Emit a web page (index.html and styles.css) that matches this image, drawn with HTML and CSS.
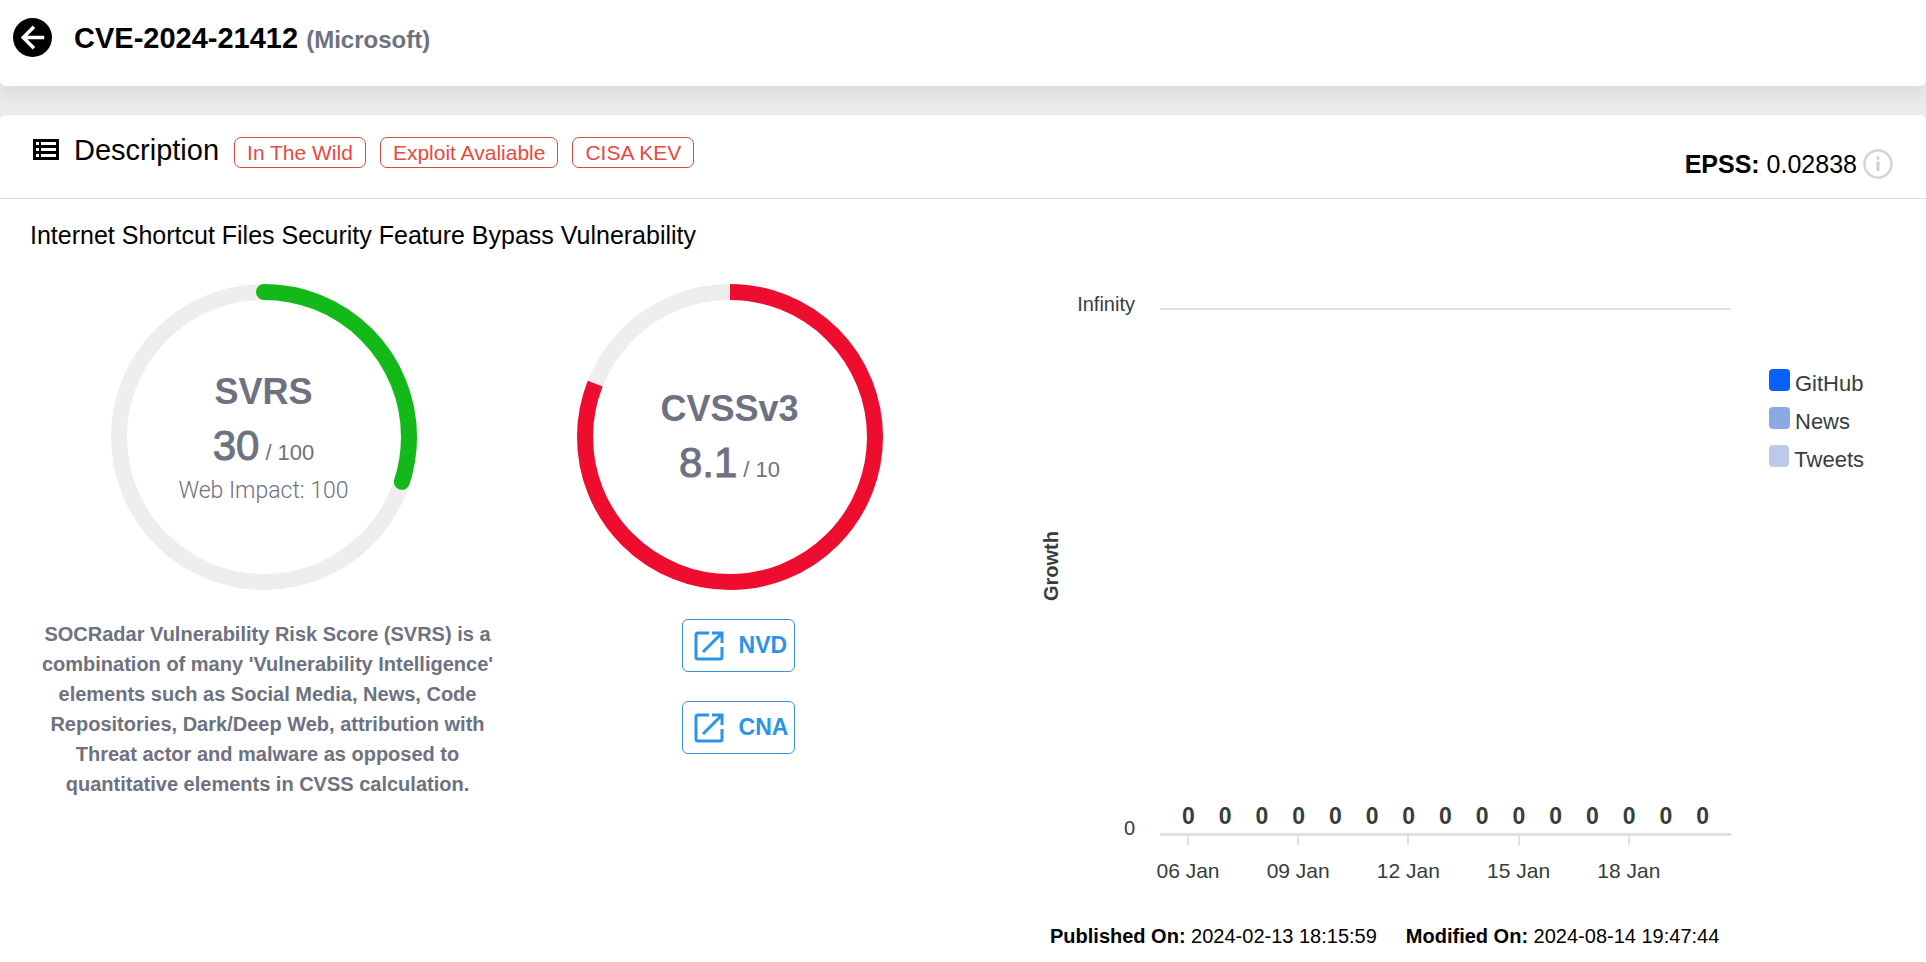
FILE: index.html
```html
<!DOCTYPE html>
<html lang="en">
<head>
<meta charset="utf-8">
<title>CVE-2024-21412</title>
<link rel="stylesheet" href="styles.css">
</head>
<body>
<header class="topbar">
  <button class="back" type="button" aria-label="Back">
    <svg viewBox="0 0 40 40" width="39" height="39"><circle cx="20" cy="20" r="20" fill="#000"/><path d="M32 20H11M21.500 9 10.500 20l11 11" fill="none" stroke="#fff" stroke-width="3.600"/></svg>
  </button>
  <h1 class="title">CVE-2024-21412 <span class="vendor">(Microsoft)</span></h1>
</header>
<main class="card">
  <div class="card-head">
    <div class="head-left">
      <svg class="list-icon" viewBox="0 0 26 21" width="26" height="21"><path fill="#000" fill-rule="evenodd" d="M0 0h26v21H0zM3 3v3h3V3zM8 3v3h15V3zM3 9v3h3V9zM8 9v3h15V9zM3 15v3h3v-3zM8 15v3h15v-3z"/></svg>
      <h2 class="section">Description</h2>
      <ul class="badges"><li class="badge">In The Wild</li><li class="badge">Exploit Avaliable</li><li class="badge">CISA KEV</li></ul>
    </div>
    <div class="epss">
      <span><b>EPSS:</b> 0.02838</span>
      <button class="info" type="button" aria-label="About EPSS">
        <svg viewBox="0 0 30 30" width="30" height="30"><circle cx="15" cy="15" r="13.500" fill="none" stroke="#d6d6d6" stroke-width="2.600"/><path d="M13.500 7.500h3v3h-3zM13.500 12.500h3V22h-3z" fill="#cfcfcf"/></svg>
      </button>
    </div>
  </div>
  <p class="summary">Internet Shortcut Files Security Feature Bypass Vulnerability</p>
  <div class="panels">
    <section class="score">
      <div class="gauge">
        <svg viewBox="0 0 306 306" width="306" height="306"><circle class="track" cx="153" cy="153" r="145"/><circle class="arc arc-green" cx="153" cy="153" r="145" pathLength="100" stroke-dasharray="30 100" transform="rotate(-90 153 153)"/></svg>
        <div class="gauge-text">
          <h3 class="gauge-name">SVRS</h3>
          <p class="gauge-value"><span class="num">30</span> <span class="max">/ 100</span></p>
          <p class="impact">Web Impact: 100</p>
        </div>
      </div>
      <p class="about">SOCRadar Vulnerability Risk Score (SVRS) is a combination of many 'Vulnerability Intelligence' elements such as Social Media, News, Code Repositories, Dark/Deep Web, attribution with Threat actor and malware as opposed to quantitative elements in CVSS calculation.</p>
    </section>
    <section class="score">
      <div class="gauge">
        <svg viewBox="0 0 306 306" width="306" height="306"><circle class="track" cx="153" cy="153" r="145"/><circle class="arc arc-red" cx="153" cy="153" r="145" pathLength="100" stroke-dasharray="81 100" transform="rotate(-90 153 153)"/></svg>
        <div class="gauge-text gauge-text-short">
          <h3 class="gauge-name">CVSSv3</h3>
          <p class="gauge-value"><span class="num">8.1</span> <span class="max">/ 10</span></p>
        </div>
      </div>
      <div class="links">
        <a class="link" href="#nvd"><svg viewBox="0 0 30 30" width="30" height="30"><path d="M15 2H4Q2 2 2 4V26Q2 28 4 28H26Q28 28 28 26V16M18 2H28V12M27 3 9 21" fill="none" stroke="#2a94e8" stroke-width="3"/></svg>NVD</a>
        <a class="link" href="#cna"><svg viewBox="0 0 30 30" width="30" height="30"><path d="M15 2H4Q2 2 2 4V26Q2 28 4 28H26Q28 28 28 26V16M18 2H28V12M27 3 9 21" fill="none" stroke="#2a94e8" stroke-width="3"/></svg>CNA</a>
      </div>
    </section>
    <section class="trend">
      <div class="chart">
        <div class="y-title">Growth</div>
        <div class="y-labels"><span>Infinity</span><span>0</span></div>
        <div class="plot">
          <ol class="values"><li>0</li><li>0</li><li>0</li><li>0</li><li>0</li><li>0</li><li>0</li><li>0</li><li>0</li><li>0</li><li>0</li><li>0</li><li>0</li><li>0</li><li>0</li></ol>
        </div>
        <ol class="dates"><li>06 Jan</li><li>09 Jan</li><li>12 Jan</li><li>15 Jan</li><li>18 Jan</li></ol>
        <ul class="legend">
          <li><i class="swatch github"></i>GitHub</li>
          <li><i class="swatch news"></i>News</li>
          <li><i class="swatch tweets"></i>Tweets</li>
        </ul>
      </div>
      <p class="stamps"><span><b>Published On:</b> 2024-02-13 18:15:59</span><span><b>Modified On:</b> 2024-08-14 19:47:44</span></p>
    </section>
  </div>
</main>
</body>
</html>
```
FILE: styles.css
```css
* { box-sizing: border-box; }
body, h1, h2, h3, p, ul, ol { margin: 0; padding: 0; }
ul, ol { list-style: none; }
svg { display: block; flex: none; }
button { border: 0; padding: 0; background: none; cursor: pointer; }

body {
  min-height: 100vh;
  display: flex;
  flex-direction: column;
  gap: 29px;
  background: #ebebeb;
  color: #000;
  font-family: "Liberation Sans", Arial, sans-serif;
}

.topbar {
  display: flex;
  align-items: flex-start;
  gap: 22px;
  padding: 18px 13px 28px;
  background: #fff;
  border-radius: 0 0 6px 6px;
  box-shadow: 0 8px 20px rgba(0, 0, 0, .08);
}
.title { font-size: 29px; line-height: 40px; }
.vendor { font-size: 24px; line-height: 24px; color: #6e7181; }

.card {
  flex: 1;
  background: #fff;
  border-radius: 6px 6px 0 0;
}
.card-head {
  display: flex;
  justify-content: space-between;
  align-items: flex-start;
  height: 84px;
  padding: 19px 33px 0;
  border-bottom: 1px solid #dcdcdc;
}
.head-left { display: flex; align-items: baseline; gap: 15px; }
.section { font-size: 29px; line-height: 33px; font-weight: 400; }
.badges { display: flex; gap: 14px; }
.badge {
  padding: 0 12px;
  border: 1px solid #d9493f;
  border-radius: 7px;
  font-size: 21px;
  line-height: 29px;
  color: #e8493f;
}
.epss {
  display: flex;
  align-items: center;
  gap: 6px;
  padding-top: 15px;
  font-size: 25px;
  line-height: 30px;
}

.summary { padding: 21px 30px 34px; font-size: 25px; line-height: 30px; }

.panels { display: grid; grid-template-columns: 527fr 405fr 994fr; }
.score { display: flex; flex-direction: column; align-items: center; gap: 29px; }
.gauge { display: grid; place-items: center; }
.gauge > * { grid-area: 1 / 1; }
.track, .arc { fill: none; stroke-width: 16; }
.track { stroke: #eee; }
.arc-green { stroke: #12b918; stroke-linecap: round; }
.arc-red { stroke: #ee0c2f; }
.gauge-text { text-align: center; color: #6e7181; }
.gauge-text-short { padding-top: 4px; }
.gauge-name { font-size: 36px; line-height: 48px; }
.gauge-value {
  display: flex;
  justify-content: center;
  align-items: baseline;
  gap: 6px;
  line-height: 60px;
}
.num { font-size: 42px; -webkit-text-stroke: 1px #6e7181; }
.max { font-size: 22px; line-height: 24px; }
.impact { font-family: Roboto, "Liberation Sans", sans-serif; font-size: 23px; line-height: 30px; font-weight: 300; }
.about {
  max-width: 468px;
  padding-left: 8px;
  font-size: 20px;
  line-height: 30px;
  font-weight: 700;
  text-align: center;
  color: #6e7181;
}
.links { display: flex; flex-direction: column; gap: 29px; padding-left: 18px; }
.link {
  display: flex;
  align-items: center;
  gap: 15px;
  height: 53px;
  padding: 0 6px 0 11px;
  border: 1px solid #3b93d4;
  border-radius: 6px;
  font-size: 23px;
  font-weight: 700;
  color: #2a94e8;
  text-decoration: none;
}

.trend { padding: 8px 62px 14px 108px; }
.chart {
  display: grid;
  grid-template-columns: 22px 73px 1fr 95px;
  color: #373d3f;
}
.y-title {
  align-self: center;
  writing-mode: vertical-rl;
  rotate: 180deg;
  font-size: 20px;
  line-height: 22px;
  font-weight: 700;
  text-align: center;
}
.y-labels {
  display: flex;
  flex-direction: column;
  justify-content: space-between;
  align-items: flex-end;
  font-size: 20px;
  line-height: 24px;
}
.plot {
  display: flex;
  align-items: flex-end;
  height: 528px;
  margin: 16px 38px 4px 25px;
  padding: 0 10px;
  border-top: 2px solid #e0e0e0;
  border-bottom: 3px solid #e0e0e0;
}
.values { flex: 1; display: grid; grid-template-columns: repeat(15, 1fr); padding-bottom: 4px; }
.values li { font-size: 23px; line-height: 26px; font-weight: 700; text-align: center; }
.dates {
  grid-column: 3;
  grid-row: 2;
  display: grid;
  grid-template-columns: repeat(5, 1fr);
  margin: -4px 48px 0 35px;
}
.dates li {
  width: 36px;
  display: flex;
  flex-direction: column;
  align-items: center;
  gap: 14px;
  font-size: 21px;
  line-height: 24px;
  white-space: nowrap;
}
.dates li::before { content: ""; width: 2px; height: 9px; background: #e0e0e0; }
.legend {
  grid-column: 4;
  grid-row: 1;
  display: flex;
  flex-direction: column;
  gap: 10px;
  padding-top: 77px;
}
.legend li { display: flex; align-items: baseline; gap: 5px; font-size: 22px; line-height: 26px; }
.swatch { width: 21px; height: 22px; border-radius: 4px; }
.github { background: #0561ff; }
.news { background: #8ca9e2; }
.tweets { background: #bbcae8; }
.stamps {
  display: flex;
  gap: 29px;
  padding: 41px 0 0 10px;
  font-size: 20px;
  line-height: 24px;
  white-space: nowrap;
}
```
